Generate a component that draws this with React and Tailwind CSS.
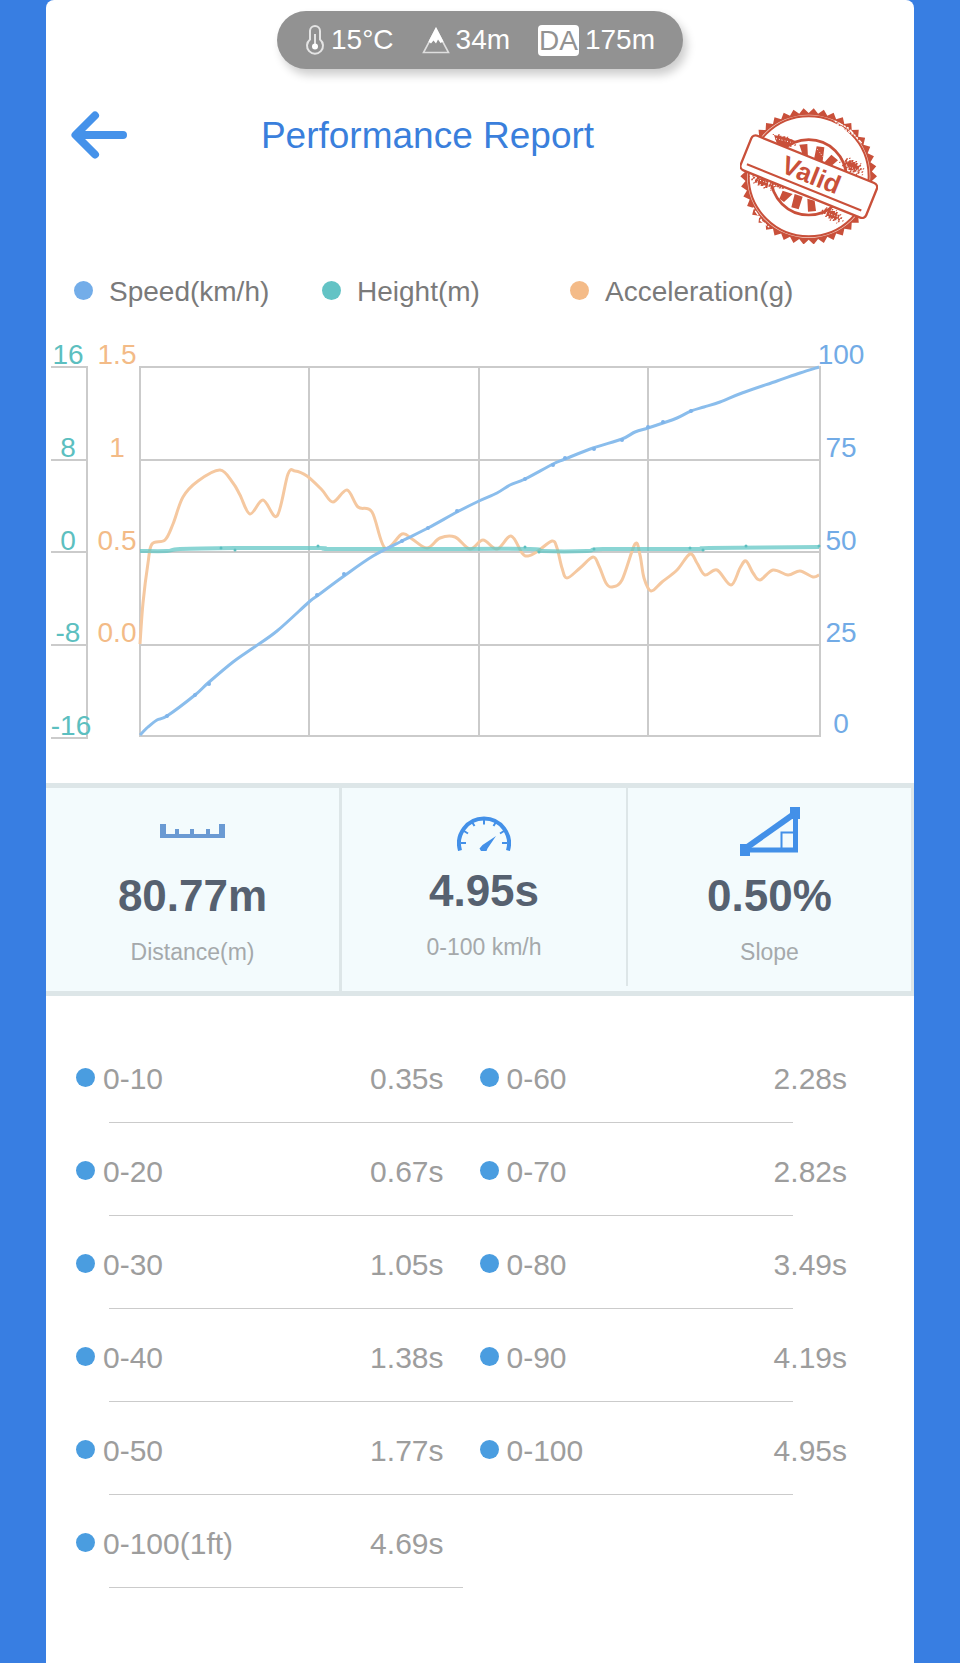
const SPEED = [
  [0, 368], [8, 360], [17, 353], [27, 349], [55, 328], [68, 316], [93, 295], [113, 281], [137, 264], [169, 235],
  [177, 229], [204, 209], [233, 189], [262, 174], [288, 161], [317, 145], [339, 134], [357, 126], [370, 118],
  [385, 112], [413, 97], [425, 92], [453, 81], [482, 72], [495, 65], [508, 61], [523, 56], [537, 51], [551, 44],
  [564, 40], [580, 35], [602, 26], [637, 14], [660, 6], [679, 0],
];

const HEIGHT = [
  [0, 184], [27, 184], [40, 182], [95, 181], [180, 181], [190, 182], [290, 182], [390, 182], [402, 184],
  [447, 184], [463, 182], [557, 182], [569, 181], [679, 180],
];

const ACCELERATION = [
  [0, 277], [3, 236], [8, 196], [12, 177], [25, 173], [33, 157], [43, 130], [58, 114], [80, 103], [93, 116],
  [100, 128], [110, 147], [123, 133], [137, 149], [148, 107], [155, 104], [167, 109], [182, 123], [193, 135],
  [207, 123], [218, 140], [232, 145], [245, 181], [262, 167], [272, 172], [287, 181], [300, 171], [315, 170],
  [330, 182], [343, 173], [357, 182], [371, 169], [382, 186], [388, 189], [398, 184], [412, 174], [417, 181],
  [422, 201], [427, 211], [440, 201], [453, 190], [459, 199], [466, 216], [472, 220], [482, 213], [495, 177],
  [500, 188], [504, 211], [511, 224], [522, 215], [537, 203], [550, 187], [557, 196], [565, 208], [577, 203],
  [591, 218], [600, 201], [606, 194], [613, 206], [620, 213], [633, 203], [648, 208], [660, 204], [673, 210],
  [679, 208],
];

const SPEED_MARKS = [[27, 349], [55, 328], [69, 317], [177, 228], [204, 207], [262, 174], [288, 161], [317, 144], [385, 112], [413, 98], [425, 91], [454, 82], [482, 73], [508, 60], [523, 55], [551, 44]];
const HEIGHT_MARKS = [[81, 181], [95, 183], [178, 179], [385, 180], [399, 185], [454, 182], [550, 181], [563, 183], [606, 179], [679, 179]];

const ROW_LINES = [0, 93, 185, 278, 369];
const COLUMN_LINES = [0, 169, 339, 508, 680];
const TICKS = [0, 93, 185, 278, 371];

const HEIGHT_LABELS = [['16', -72, -3], ['8', -72, 90], ['0', -72, 183], ['-8', -72, 275], ['-16', -69, 368]];
const ACCEL_LABELS = [['1.5', -23, -3], ['1', -23, 90], ['0.5', -23, 183], ['0.0', -23, 275]];
const SPEED_LABELS = [['100', 701, -3], ['75', 701, 90], ['50', 701, 183], ['25', 701, 275], ['0', 701, 366]];

const SPLITS = [
  [['0-10', '0.35s'], ['0-60', '2.28s']],
  [['0-20', '0.67s'], ['0-70', '2.82s']],
  [['0-30', '1.05s'], ['0-80', '3.49s']],
  [['0-40', '1.38s'], ['0-90', '4.19s']],
  [['0-50', '1.77s'], ['0-100', '4.95s']],
  [['0-100(1ft)', '4.69s']],
];

// Smooth curve through all points (Catmull-Rom to bezier)
const toPath = (pts) => {
  let d = `M${pts[0][0]} ${pts[0][1]}`;
  for (let i = 0; i < pts.length - 1; i++) {
    const p0 = pts[i - 1] || pts[i];
    const p1 = pts[i];
    const p2 = pts[i + 1];
    const p3 = pts[i + 2] || p2;
    const c1 = [p1[0] + (p2[0] - p0[0]) / 6, p1[1] + (p2[1] - p0[1]) / 6];
    const c2 = [p2[0] - (p3[0] - p1[0]) / 6, p2[1] - (p3[1] - p1[1]) / 6];
    d += ` C${c1.join(' ')} ${c2.join(' ')} ${p2.join(' ')}`;
  }
  return d;
};

const ThermometerIcon = () => (
  <svg className="w-5 h-[30px]" viewBox="0 0 20 30" fill="none" stroke="#e4e4e4" strokeWidth="2">
    <path d="M5 14.5V6a5 5 0 0 1 10 0v8.500a8 8 0 1 1-10 0z" />
    <path d="M10 9v12" />
    <circle cx="10" cy="21.500" r="3" fill="#fff" stroke="none" />
  </svg>
);

const MountainIcon = () => (
  <svg className="w-7 h-7" viewBox="0 0 28 28" fill="none">
    <path d="M14 3 1.500 26.500h25z" stroke="#dedede" strokeWidth="1.600" />
    <path d="M14 1 6.500 15.500l2.500 2 2.500-3 2.500 3 2-4 2.500 3.500 3-1.500z" fill="#fff" />
  </svg>
);

const ArrowIcon = () => (
  <svg className="w-14 h-12" viewBox="0 0 56 48" fill="none" stroke="#4592ea" strokeWidth="8" strokeLinecap="round" strokeLinejoin="round">
    <path d="M24 4.500 4.500 24 24 43.500M6 24h46" />
  </svg>
);

const TEETH = 42;
const teeth = Array.from({ length: TEETH * 2 }, (_, i) => {
  const r = i % 2 ? 190 : 205;
  const a = (i * Math.PI) / TEETH;
  return `${(266 + r * Math.cos(a)).toFixed(1)},${(257 + r * Math.sin(a)).toFixed(1)}`;
}).join(' ');

// Ink specks spread round a centre, denser towards the middle
const specks = (cx, cy, rx, ry, count) => {
  let d = '';
  for (let i = 0; i < count; i++) {
    const a = i * 2.4;
    const r = i / count;
    const size = 11 - 8 * r;
    const x = cx + rx * r * Math.cos(a) - size / 2;
    const y = cy + ry * r * Math.sin(a) + (x - cx) * 0.4 - size / 2;
    d += `M${x.toFixed(1)} ${y.toFixed(1)}h${size}l-2 ${size}h-${size}z`;
  }
  return d;
};

const ValidStamp = () => (
  <svg className="w-[138px] h-[136px]" viewBox="60 52 414 408" role="img" aria-label="Valid">
    <polygon points={teeth} fill="#c9503a" />
    <circle cx="266" cy="257" r="185" fill="#f6d3c9" />
    <circle cx="266" cy="257" r="180" fill="#fff" stroke="#c9503a" strokeWidth="6" />
    {/* worn ink on the ring */}
    <g stroke="#fff" strokeWidth="4" strokeLinecap="round" strokeDasharray="3 9 12 7 2 8">
      <path d="M346 92 385 112 424 156M352 100 396 130M100 352 130 396 148 410M112 382 138 402" fill="none" />
    </g>
    <circle cx="266" cy="260" r="113" fill="#fff" stroke="#c9503a" strokeWidth="8" />
    <g fill="#c9503a">
      <path d="M238 162l24-2 2 42-14-4zM290 167l23 3-6 50-26-10zM334 192l20 17-28 24-20-10z" />
      <path d="M188 300l30 10-26 24-14-10zM224 310l24 8-12 38-22-6zM262 324l22 6 4 31-24 2z" />
      <path d="M162 133l40 8 24 10-6 10-26 10-24-14z" />
      <path d={specks(196, 150, 38, 14, 26)} />
      <path d={specks(398, 228, 40, 24, 54)} />
      <path d={specks(128, 276, 42, 18, 40)} />
      <path d={specks(174, 284, 34, 8, 16)} />
      <path d={specks(338, 374, 36, 20, 46)} />
    </g>
    <g stroke="#fff" strokeWidth="3" strokeDasharray="3 7 2 5">
      <path d="M168 144l50 12M380 226l44 16M104 264l80 26M318 366l40 14M292 176l18 24" />
    </g>
    <g transform="translate(266 259) rotate(22)">
      <rect x="-203" y="-57" width="406" height="112" rx="14" fill="#fff" stroke="#c9503a" strokeWidth="7" />
      <path d="M-186 34H184" stroke="#c9503a" strokeWidth="6" />
      <text x="5" y="18" textAnchor="middle" fontSize="78" fontWeight="700" fill="#c9503a">Valid</text>
    </g>
  </svg>
);

const RulerIcon = () => (
  <svg className="w-[65px] h-3.5" viewBox="0 0 65 14" fill="#6a9ad3">
    <path d="M0 0h6v10h9V5h4v5h11V5h4v5h12V5h4v5h9V0h6v14H0z" />
  </svg>
);

const GaugeIcon = () => (
  <svg className="w-[54px] h-[35px]" viewBox="0 0 54 35" fill="none" stroke="#4390e8">
    <path d="M3 34.500A25 25 0 1 1 51 34.500" strokeWidth="4" />
    <path d="M4 27h5M7 15l4 2.500M15 6l2.500 4M27 3v5.500M39 6l-2.500 4M47 15l-4 2.500M50 27h-5" strokeWidth="2" />
    <path d="M39 20 30.500 32.500 29.500 35h-5.500l-1.500-2.500 3-3.500z" fill="#4390e8" stroke="none" />
  </svg>
);

const SlopeIcon = () => (
  <svg className="w-[60px] h-[49px]" viewBox="0 0 60 49" fill="none" stroke="#4390e8">
    <path d="M0 37h10v12H0zM50 0h10v12H50z" fill="#4390e8" stroke="none" />
    <path d="M6 41 54 7" strokeWidth="6" />
    <path d="M5 43h50.500V8" strokeWidth="5" />
    <path d="M41.500 41V25.500H54" strokeWidth="2" />
  </svg>
);

const LegendItem = ({ dot, label }) => (
  <li className="flex items-center gap-4">
    <span className={`w-[19px] h-[19px] mb-1 rounded-full ${dot}`} />
    {label}
  </li>
);

const AxisLabels = ({ labels, color }) => (
  <g fill={color} fontSize="28" textAnchor="middle">
    {labels.map(([text, x, y]) => (
      <text key={text} x={x} y={y}>{text}</text>
    ))}
  </g>
);

const Chart = () => (
  <svg className="block w-full mt-5" viewBox="-94 -37 868 420" fill="none">
    <g stroke="#cbcbcb" strokeWidth="2">
      {ROW_LINES.map((y) => <path key={y} d={`M-1 ${y}H681`} />)}
      {COLUMN_LINES.map((x) => <path key={x} d={`M${x} 0V369`} />)}
      {TICKS.map((y) => <path key={y} d={`M-89 ${y}H-52`} />)}
      <path d="M-53 0V371" />
    </g>
    <AxisLabels labels={HEIGHT_LABELS} color="#5cbfc0" />
    <AxisLabels labels={ACCEL_LABELS} color="#f3bb87" />
    <AxisLabels labels={SPEED_LABELS} color="#72abe6" />
    <path d={toPath(ACCELERATION)} stroke="#f5c8a0" strokeWidth="3" />
    <path d={toPath(HEIGHT)} stroke="#63c7c5" strokeOpacity="0.75" strokeWidth="4" />
    <path d={toPath(SPEED)} stroke="#8abdec" strokeWidth="3" />
    {HEIGHT_MARKS.map(([x, y]) => <circle key={x} cx={x} cy={y} r="1.500" fill="#5cbfc0" />)}
    {SPEED_MARKS.map(([x, y]) => <circle key={x} cx={x} cy={y} r="2" fill="#7fb4ea" />)}
  </svg>
);

const Stat = ({ icon, iconBox, value, label, className }) => (
  <div className={`flex flex-col items-center pt-[18px] border-[#dde6e8] ${className}`}>
    <div className={`flex justify-center ${iconBox}`}>{icon}</div>
    <p className="mt-4 text-[44px] leading-12 font-bold text-[#566170]">{value}</p>
    <p className="mt-[18px] text-[23px] leading-7 text-[#a5a9ab]">{label}</p>
  </div>
);

const App = () => {
  return (
    <div className="min-h-screen bg-[#387ee2] px-[46px] font-['Liberation_Sans',Arial,sans-serif]">
      <main className="min-h-screen bg-white rounded-t-lg pt-[11px] pb-[75px]">
        {/* Conditions */}
        <div className="w-fit h-[58px] mx-auto px-7 flex items-center gap-7 rounded-full bg-[#929292] text-white text-[28px] shadow-[4px_6px_10px_rgba(0,0,0,0.2)]">
          <span className="flex items-center gap-1.5"><ThermometerIcon />15°C</span>
          <span className="flex items-center gap-1.5"><MountainIcon />34m</span>
          <span className="flex items-center gap-1.5">
            <span className="px-px leading-[31px] rounded bg-white text-[#929292]">DA</span>175m
          </span>
        </div>

        {/* Header */}
        <header className="mt-[39px] pl-[25px] pr-9 flex justify-between items-start">
          <button type="button" aria-label="Back" className="h-[54px] flex items-center cursor-pointer">
            <ArrowIcon />
          </button>
          <h1 className="text-[37px] leading-14 text-[#3a7fdc]">Performance Report</h1>
          <div className="pl-3">
            <ValidStamp />
          </div>
        </header>

        {/* Chart */}
        <ul className="mt-[30px] pl-7 pr-24 grid grid-cols-3 text-[28px] leading-9 text-[#7a7a7a]">
          <LegendItem dot="bg-[#73ade9]" label="Speed(km/h)" />
          <LegendItem dot="bg-[#63c3c5]" label="Height(m)" />
          <LegendItem dot="bg-[#f4bb88]" label="Acceleration(g)" />
        </ul>
        <Chart />

        {/* Summary */}
        <section className="mt-[33px] grid grid-cols-[296fr_286fr_286fr] bg-[#f3fbfd] border-y-[5px] border-[#dde6e8]">
          <Stat className="pb-[25px] border-r-[3px]" iconBox="h-[50px] items-center" icon={<RulerIcon />} value="80.77m" label="Distance(m)" />
          <Stat className="mb-[5px] border-r-2" iconBox="h-[45px] items-end" icon={<GaugeIcon />} value="4.95s" label="0-100 km/h" />
          <Stat className="pb-[25px] border-r-[3px]" iconBox="h-[50px] items-center" icon={<SlopeIcon />} value="0.50%" label="Slope" />
        </section>

        {/* Split times */}
        <ul className="pt-[34px] text-[30px] leading-9 text-[#9d9d9d]">
          {SPLITS.map((row) => (
            <li key={row[0][0]}>
              <div className="grid grid-cols-2 gap-9 pt-[31px] pb-[25px] pl-[30px] pr-[67px]">
                {row.map(([range, time]) => (
                  <div key={range} className="flex items-center">
                    <span className="w-[19px] h-[19px] mr-2 mb-1 rounded-full bg-[#4a9de0]" />
                    <span>{range}</span>
                    <span className="ml-auto">{time}</span>
                  </div>
                ))}
              </div>
              <hr className={`ml-[63px] border-[#cbcbcb] ${row.length > 1 ? 'mr-[121px]' : 'mr-[52%]'}`} />
            </li>
          ))}
        </ul>
      </main>
    </div>
  );
};

export default App;
